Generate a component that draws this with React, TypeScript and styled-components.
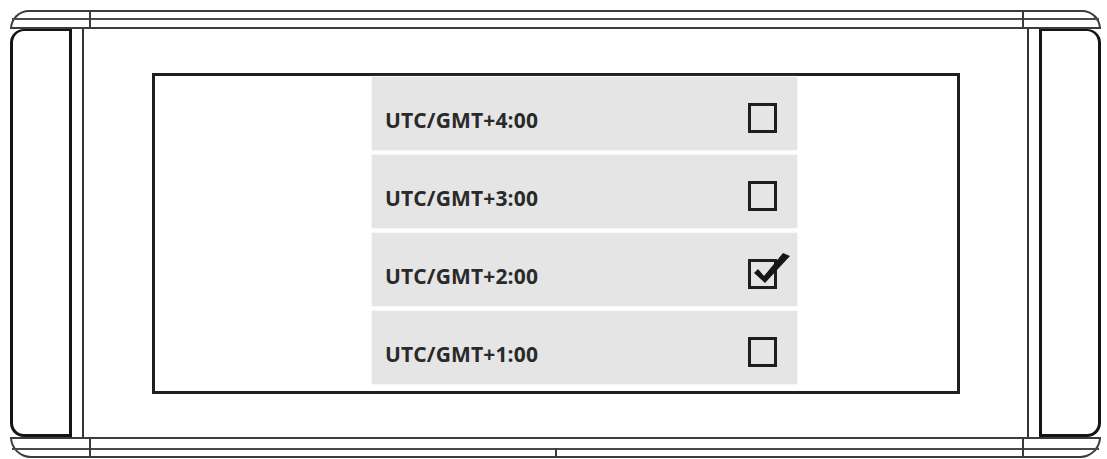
import React from "react";
import styled, { createGlobalStyle } from "styled-components";

const GlobalStyle = createGlobalStyle`
  html, body {
    margin: 0;
    padding: 0;
    background: #ffffff;
  }
  body {
    font-family: "Open Sans", "Liberation Sans", Arial, sans-serif;
  }
`;

const Page = styled.div`
  width: 1107px;
  height: 459px;
  box-sizing: border-box;
  padding: 10px 0 0 10px;
  overflow: hidden;
`;

const Device = styled.div`
  width: 1091px;
  height: 448px;
  display: flex;
  flex-direction: column;
`;

/* Top and bottom rails of the housing: three segments with a groove line */
const Rail = styled.div<{ $edge: "top" | "bottom" }>`
  flex: none;
  box-sizing: border-box;
  height: ${(p) => (p.$edge === "top" ? "19px" : "21px")};
  display: grid;
  grid-template-columns: 77px 1fr 77px;
  border: 2px solid #3c3c3c;
  border-radius: ${(p) => (p.$edge === "top" ? "22px 22px 0 0" : "0 0 22px 22px")};
`;

const RailSegment = styled.div<{ $edge: "top" | "bottom" }>`
  position: relative;
  display: flex;
  flex-direction: column;
  justify-content: ${(p) => (p.$edge === "top" ? "flex-start" : "flex-end")};
  & + & {
    border-left: 2px solid #3c3c3c;
  }
`;

const Groove = styled.div<{ $edge: "top" | "bottom" }>`
  height: 0;
  border-top: 2px solid #4a4a4a;
  margin-top: ${(p) => (p.$edge === "top" ? "6px" : "0")};
  margin-bottom: ${(p) => (p.$edge === "bottom" ? "6px" : "0")};
`;

const CenterTick = styled.div`
  position: absolute;
  left: 50%;
  bottom: 0;
  width: 2px;
  height: 8px;
  margin-left: -2px;
  background: #3c3c3c;
`;

const Middle = styled.div`
  flex: 1;
  display: flex;
  min-height: 0;
`;

const EndCap = styled.div<{ $side: "left" | "right" }>`
  flex: none;
  width: 62px;
  box-sizing: border-box;
  border: 3px solid #141414;
  border-top-width: 2px;
  border-radius: ${(p) => (p.$side === "left" ? "14px 0 0 14px" : "0 14px 14px 0")};
`;

const Body = styled.div`
  flex: 1;
  margin: 0 10px;
  display: flex;
  box-sizing: border-box;
  border-left: 2px solid #333333;
  border-right: 2px solid #333333;
  padding: 44px 67px 43px 68px;
`;

const Screen = styled.div`
  flex: 1;
  box-sizing: border-box;
  border: 3px solid #1f1f1f;
  padding: 1px 0 0 217px;
  display: flex;
  flex-direction: column;
  gap: 5px;
`;

const ZoneRow = styled.div`
  width: 425px;
  height: 73px;
  flex: none;
  box-sizing: border-box;
  display: flex;
  align-items: center;
  justify-content: space-between;
  padding: 8px 20px 0 13px;
  background: #e5e5e5;
  box-shadow: 0 0 2px #e5e5e5;
`;

const ZoneLabel = styled.span`
  font-family: "Open Sans", "Liberation Sans", Arial, sans-serif;
  font-weight: 700;
  font-size: 21px;
  line-height: 1;
  letter-spacing: 0.15px;
  color: #2a2a2a;
  margin-top: 5px;
`;

const Checkbox = styled.div`
  position: relative;
  width: 29px;
  height: 30px;
  box-sizing: border-box;
  border: 3px solid #1e1e1e;
`;

const CheckMark = styled.svg`
  position: absolute;
  left: -5px;
  top: -11px;
  width: 48px;
  height: 40px;
  overflow: visible;
`;

const zones = [
  { label: "UTC/GMT+4:00", checked: false },
  { label: "UTC/GMT+3:00", checked: false },
  { label: "UTC/GMT+2:00", checked: true },
  { label: "UTC/GMT+1:00", checked: false },
];

function RailBar({ edge }: { edge: "top" | "bottom" }) {
  return (
    <Rail $edge={edge}>
      <RailSegment $edge={edge}>
        <Groove $edge={edge} />
      </RailSegment>
      <RailSegment $edge={edge}>
        <Groove $edge={edge} />
        {edge === "bottom" && <CenterTick />}
      </RailSegment>
      <RailSegment $edge={edge}>
        <Groove $edge={edge} />
      </RailSegment>
    </Rail>
  );
}

export default function App() {
  return (
    <>
      <GlobalStyle />
      <Page>
        <Device>
          <RailBar edge="top" />
          <Middle>
            <EndCap $side="left" />
            <Body>
              <Screen>
                {zones.map((z) => (
                  <ZoneRow key={z.label}>
                    <ZoneLabel>{z.label}</ZoneLabel>
                    <Checkbox>
                      {z.checked && (
                        <CheckMark viewBox="-2 -8 48 40">
                          <polygon
                            points="6,14 10,10 16,17 35,-6 42,-3 17,24"
                            fill="#161616"
                          />
                        </CheckMark>
                      )}
                    </Checkbox>
                  </ZoneRow>
                ))}
              </Screen>
            </Body>
            <EndCap $side="right" />
          </Middle>
          <RailBar edge="bottom" />
        </Device>
      </Page>
    </>
  );
}
